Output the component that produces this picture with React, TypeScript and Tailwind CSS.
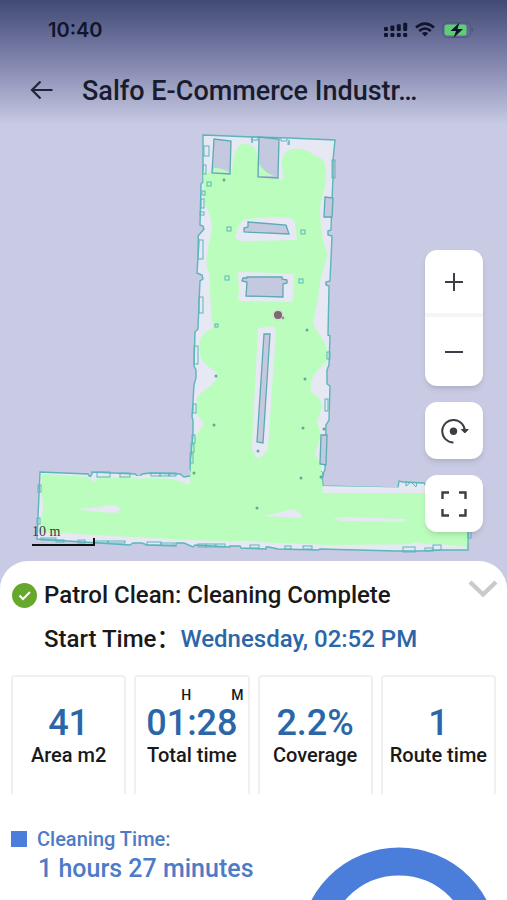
import { useState } from "react";

interface Stat {
  value: string;
  label: string;
  hasUnits?: boolean;
}

const stats: Stat[] = [
  { value: "41", label: "Area m2" },
  { value: "01:28", label: "Total time", hasUnits: true },
  { value: "2.2%", label: "Coverage" },
  { value: "1", label: "Route time" },
];

// [x, y, width, height]
const wallBoxes = [
  [204, 146, 5, 10], [203, 165, 3, 9], [202, 191, 3, 4], [201, 199, 3, 9], [200, 212, 4, 3],
  [198, 240, 5, 19], [199, 297, 4, 16], [194, 346, 4, 18], [193, 404, 3, 9], [192, 435, 3, 8],
  [191, 444, 3, 8], [190, 453, 3, 10], [332, 160, 3, 18], [327, 352, 3, 7], [325, 399, 3, 12],
  [97, 472, 13, 5], [120, 473, 10, 4], [151, 473, 9, 3], [160, 473, 9, 3], [169, 473, 7, 3],
  [38, 485, 3, 7], [37, 518, 3, 6], [41, 538, 15, 2], [56, 540, 8, 2], [78, 540, 7, 3],
  [96, 541, 12, 2], [108, 541, 17, 2], [147, 542, 14, 3], [161, 543, 13, 2], [198, 544, 8, 3],
  [206, 544, 9, 3], [216, 544, 9, 3], [250, 545, 9, 3], [285, 546, 6, 3], [303, 546, 9, 3],
  [403, 547, 12, 5], [433, 545, 8, 5], [425, 548, 8, 3], [468, 531, 3, 7],
];

const pillars = [
  [207, 182, 4], [227, 227, 4], [301, 230, 4], [225, 276, 4], [299, 279, 4], [215, 324, 3],
];

const dots = [
  [224, 180], [307, 330], [216, 376], [305, 379], [214, 425], [303, 428],
  [324, 429], [258, 451], [301, 478], [321, 477], [194, 473], [257, 508],
];

function FloorMap() {
  return (
    <svg viewBox="0 125 507 452" className="block w-full" role="img" aria-label="Cleaning map">
      <path
        d="M203 135 L252 137 V143 M289 140 V145 M203 135 L253 137 L289 138 L335 140 L333 160 V178 L332 200 L331 230 L328 231 V235 L332 236 L330 281 L326 282 V285 L329 286 L328 335 L330 336 L329 365 L327 370 V384 L330 386 L329 420 L326 425 L325 470 L322 475 L323 486 L398 488 L399 481 L403 482 L424 483 L427 488 L468 492 L468 550 L442 550 L420 551 L397 551 L320 549 L318 550 L278 549 L269 547 L266 547 V549 L241 548 L240 546 L230 546 V547 L195 545 L193 547 L184 543 L176 543 V546 L147 545 L142 543 H133 L130 545 L37 539 L40 472 L88 474 L90 477 L92 474 L92 472 L135 474 L139 477 L142 474 L150 473 L180 474 L184 477 L190 476 L192 474 L190 468 L193 435 V420 L192 417 L194 385 L196 378 V370 L194 366 L195 332 L198 329 L199 303 L200 281 L203 279 L202 275 L197 273 L199 242 L198 236 L204 229 L203 226 L200 225 L201 184 L203 182 Z"
        fill="#e6e8f3"
        stroke="#5cb5bb"
        strokeWidth="1.4"
      />
      <path
        d="M207 174 Q215 165 231 173 C234 163 233 146 243 144 C251 143 257 147 258 161 L276 177 Q286 184 283 173 C280 158 284 150 293 149 C305 147 313 155 322 159 C328 165 326 183 324 191 C317 210 321 224 323 240 L327 254 C326 263 322 272 320 283 Q318 300 313 323 C317 334 325 339 327 350 V361 C321 367 309 375 311 391 C315 397 322 396 322 408 L317 421 L321 435 L315 454 L321 463 L323 493 L427 493 L430 506 H468 L467 547 L440 544 L330 545 L190 540 L40 532 L42 474 L90 477 L190 479 L193 440 L204 424 L196 412 L197 397 C207 387 218 384 217 373 C208 365 201 364 200 352 C198 345 198 335 213 328 C211 310 209 284 210 274 C204 268 207 249 210 239 C215 224 209 212 206 207 L203 195 Z"
        fill="#bbfdbd"
      />
      <path d="M203 170 L208 176 L204 190 Z" fill="#bbfdbd" />
      <g fill="#e6e8f3">
        <path d="M243 220 Q266 216 289 218 Q294 218 295 223 L297 240 L254 241 L241 241 L235 238 L237 229 Z" />
        <path d="M238 272 Q266 272 294 274 L293 302 L240 301 Q236 299 239 294 Z" />
        <path d="M258 328 L272 326 Q276 327 276 331 L268 448 Q264 457 258 458 Q252 454 252 447 Z" />
        <path d="M75 509 L100 507 Q113 503 119 507 Q121 510 117 513 L98 512 Z" />
        <path d="M263 516 L294 509 Q299 511 303 518 Z" />
        <path d="M332 518 L345 517 L405 519 Q408 521 402 522 L342 521 Z" />
        <path d="M88 477 L98 478 L94 482 Z M134 476 H146 L139 480 Z M168 478 L190 478 V485 L178 481 Z" />
        <path d="M41 495 Q45 501 42 517 H39 Z M62 537 L69 532 L74 535 Q92 540 98 539 L115 537 L124 541 Z M169 541 Q182 538 199 543 Z" />
        <path d="M228 543 Q242 539 258 542 L320 545 L400 548 Q415 541 423 543 L412 550 L330 548 Z" />
        <path d="M323 486 L427 488 V493 L323 493 Z" />
      </g>
      <g fill="#c5c9e0" stroke="#5aabb3" strokeWidth="1.3">
        <path d="M214 139 L231 141 L230 174 L212 173 Z" />
        <path d="M259 137 L279 139 L278 178 L258 177 Z" />
        <path d="M325 197 L333 198 L332 217 L324 217 Z" />
        <path d="M248 222 L286 225 L289 234 L244 232 V228 L248 227 Z" />
        <path d="M247 277 L282 277 V279 L287 280 V283 L283 284 V297 L246 296 L247 282 L242 281 L243 278 L247 278 Z" />
        <path d="M264 334 L270 334 L263 443 L257 442 Z" />
        <path d="M321 435 H327 L326 465 L320 464 Z" />
      </g>
      <path d="M214 168 Q223 168 230 173 L213 172 Z M259 164 Q265 173 274 176 L259 176 Z" fill="#bbfdbd" />
      <g fill="none" stroke="#5cb5bb">
        {wallBoxes.map(([x, y, w, h]) => (
          <rect key={`${x}-${y}`} x={x} y={y} width={w} height={h} />
        ))}
        {pillars.map(([x, y, size]) => (
          <rect key={`${x}-${y}`} x={x} y={y} width={size} height={size} />
        ))}
        <path d="M252 142 V137 H258 V140 H253 M281 138 V141 H287 V138 M288 142 V145 M406 481 V486 L411 482 L416 487 L417 482 M321 471 L324 474 L322 480" />
      </g>
      {dots.map(([x, y]) => (
        <circle key={`${x}-${y}`} cx={x} cy={y} r="1.5" fill="#5eac95" />
      ))}
      <circle cx="278" cy="315" r="5.5" fill="#dcd8dc" />
      <circle cx="278" cy="315" r="4" fill="#776b70" />
      <circle cx="283" cy="318" r="1.4" fill="#9b918e" />
      <text x="32" y="536" className="font-['Liberation_Serif',serif] text-[14px]" fill="#333b3b">10 m</text>
      <path d="M32 545 H94 V538" fill="none" stroke="#111" strokeWidth="2" />
    </svg>
  );
}

function StatusBar() {
  return (
    <div className="flex h-[60px] items-center justify-between pl-12 pr-8">
      <time className="font-[Inter,sans-serif] text-[20px] font-semibold text-[#10142c]">10:40</time>
      <svg width="92" height="20" viewBox="0 0 92 20" fill="#10142c" aria-hidden="true">
        {[0, 1, 2, 3].map((i) => (
          <g key={i}>
            <rect x={1 + i * 6.4} y={7 - i * 1.4} width="4" height={4 + i * 1.4} rx="1" />
            <rect x={1 + i * 6.4} y="13" width="4" height="4" rx="1" />
          </g>
        ))}
        <g fill="none" stroke="#10142c" strokeWidth="2.6">
          <path d="M33 7.6 Q42 -.2 51 7.6" />
          <path d="M36.2 11 Q42 6 47.8 11" />
        </g>
        <path d="M38.8 13.3 Q42 10.7 45.2 13.3 L42 16.5 Z" />
        <rect x="59.7" y="2.7" width="28" height="14.6" rx="4.5" fill="none" stroke="#47577a" />
        <rect x="61.5" y="4.5" width="22" height="11" rx="2.5" fill="#61cb78" />
        <path d="M89 8 Q91.5 10 89 12 Z" fill="#47577a" />
        <path d="M76.5 2.5 L67.5 11 H73 L70.5 18 L80 9 H74.5 Z" />
      </svg>
    </div>
  );
}

function MapControls() {
  const button = "flex w-full items-center justify-center text-[#3d3d46]";
  const card = "w-[58px] overflow-hidden rounded-xl bg-white shadow-md";

  return (
    <div className="absolute right-6 top-[125px] flex flex-col gap-4">
      <div className={card}>
        <button type="button" aria-label="Zoom in" className={`${button} h-[67px] border-b-4 border-[#f5f5f5]`}>
          <svg width="20" height="20" viewBox="0 0 20 20" stroke="currentColor" strokeWidth="2">
            <path d="M1 10 H19 M10 1 V19" />
          </svg>
        </button>
        <button type="button" aria-label="Zoom out" className={`${button} h-[69px]`}>
          <svg width="20" height="20" viewBox="0 0 20 20" stroke="currentColor" strokeWidth="2">
            <path d="M1 10 H19" />
          </svg>
        </button>
      </div>
      <div className={card}>
        <button type="button" aria-label="Recenter" className={`${button} h-[57px]`}>
          <svg width="30" height="28" viewBox="0 0 30 28" fill="none" stroke="currentColor" strokeWidth="2">
            <path d="M14.5 25.5 A11.3 11.3 0 1 1 25.8 14.5" />
            <path d="M22.3 12.5 H29.2 L25.8 16 Z" fill="currentColor" strokeWidth="1" />
            <circle cx="14.5" cy="14.2" r="3.7" fill="currentColor" stroke="none" />
          </svg>
        </button>
      </div>
      <div className={card}>
        <button type="button" aria-label="Full screen" className={`${button} h-[57px]`}>
          <svg width="26" height="26" viewBox="0 0 26 26" fill="none" stroke="currentColor" strokeWidth="2.4">
            <path d="M1.5 8 V1.5 H8 M18 1.5 H24.5 V8 M24.5 18 V24.5 H18 M8 24.5 H1.5 V18" />
          </svg>
        </button>
      </div>
    </div>
  );
}

function StatCard({ stat }: { stat: Stat }) {
  return (
    <div className="flex h-[119px] flex-col items-center rounded-t border-2 border-b-0 border-[#f0f0f1] pt-2">
      <div className="flex h-5 w-full justify-end gap-10 pr-1 text-sm font-medium leading-5">
        {stat.hasUnits && (
          <>
            <span>H</span>
            <span>M</span>
          </>
        )}
      </div>
      <p className="text-4xl font-medium leading-9 text-[#2b66a8]">{stat.value}</p>
      <p className="whitespace-nowrap text-xl font-medium leading-7">{stat.label}</p>
    </div>
  );
}

export default function App() {
  const [expanded, setExpanded] = useState(true);

  return (
    <div className="flex h-screen flex-col overflow-hidden bg-[#c8cbe3] font-[Roboto,'Noto_Sans_CJK_SC',sans-serif] text-[#19191b]">
      <header className="h-[125px] shrink-0 bg-linear-to-b from-[#414a75] via-[#8286ae] via-50% to-[#c8cbe3]">
        <StatusBar />
        <div className="flex h-[62px] items-center gap-7 pl-[30px] pr-6">
          <button type="button" aria-label="Back" className="text-[#20233a]">
            <svg width="24" height="20" viewBox="0 0 24 20" fill="none" stroke="currentColor" strokeWidth="2.2">
              <path d="M22.5 9 H2 M10.5 .5 L2 9 L10.5 17.5" />
            </svg>
          </button>
          <h1 className="truncate text-[27px] font-medium text-[#191c2e]">Salfo E-Commerce Industr…</h1>
        </div>
      </header>

      <section className="relative shrink-0">
        <FloorMap />
        <MapControls />
      </section>

      <main className="relative -mt-4 min-h-0 flex-1 overflow-y-auto rounded-t-[28px] bg-white [scrollbar-width:none]">
        <div className="flex items-center pl-3 pr-2 pt-4">
          <svg width="25" height="25" viewBox="0 0 25 25" className="shrink-0" aria-hidden="true">
            <circle cx="12.5" cy="12.5" r="12.5" fill="#66a82c" />
            <path d="M7.5 12.5 L11 16 L18 9" fill="none" stroke="#fff" strokeWidth="2" />
          </svg>
          <h2 className="ml-[7px] flex-1 text-2xl font-medium leading-9">Patrol Clean: Cleaning Complete</h2>
          <button
            type="button"
            aria-label="Toggle details"
            aria-expanded={expanded}
            onClick={() => setExpanded((v) => !v)}
            className="-mt-3"
          >
            <svg width="32" height="20" viewBox="0 0 32 20" fill="none" stroke="#cacacb" strokeWidth="4.5">
              <path d="M3 3 L16 15.5 L29 3" />
            </svg>
          </button>
        </div>
        {expanded && (
          <>
            <p className="mt-2 flex pl-11 text-2xl font-medium leading-9">
              <span>Start Time：</span>
              <span className="text-[#2b66a8]">Wednesday, 02:52 PM</span>
            </p>
            <div className="mt-[18px] grid grid-cols-4 gap-2 px-[11px]">
              {stats.map((stat) => (
                <StatCard key={stat.label} stat={stat} />
              ))}
            </div>
            <div className="mt-[29px] flex items-start justify-between pl-[11px] pr-2 text-[#4d7bc6]">
              <div>
                <p className="flex items-center gap-[10px] text-xl font-medium leading-8">
                  <span className="size-4 bg-[#4a7eda]" />
                  Cleaning Time:
                </p>
                <p className="pl-[27px] text-[25px] font-medium leading-7">1 hours 27 minutes</p>
              </div>
              <svg width="200" height="200" viewBox="0 0 200 200" className="mt-6 shrink-0" role="img" aria-label="Cleaning time chart">
                <circle cx="100" cy="100" r="85.5" fill="none" stroke="#4a7eda" strokeWidth="28" />
              </svg>
            </div>
          </>
        )}
      </main>
    </div>
  );
}
